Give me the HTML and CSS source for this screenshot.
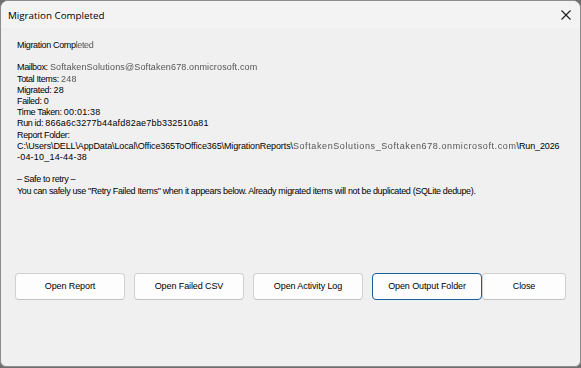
FILE: index.html
```html
<!DOCTYPE html>
<html>
<head>
<meta charset="utf-8">
<link rel="stylesheet" href="styles.css">
</head>
<body>
<div class="window">
  <div class="titlebar">
    <span class="title">Migration Completed</span>
    <span class="close-x"><svg width="12" height="12" viewBox="0 0 12 12"><path d="M1.5 1.5 L10.5 10.5 M10.5 1.5 L1.5 10.5" stroke="#1a1a1a" stroke-width="1.1" fill="none"/></svg></span>
  </div>
  <div class="content">
    <div class="msg">
      <div>Migration Comp<span class="blur">leted</span></div>
      <div class="blank"></div>
      <div>Mailbox: <span class="blur mail">SoftakenSolutions@Softaken678.onmicrosoft.com</span></div>
      <div>Total Items: <span class="blur num">248</span></div>
      <div>Migrated: <span class="num">28</span></div>
      <div>Failed: <span class="num">0</span></div>
      <div>Time Taken: <span class="num">00:01:38</span></div>
      <div>Run id: <span class="num">866a6c3277b44afd82ae7bb332510a81</span></div>
      <div>Report Folder:</div>
      <div><span class="wide">C:\Users\DELL\AppData\Local\Office365ToOffice365\MigrationReports\</span><span class="blur path">SoftakenSolutions_Softaken678.onmicrosoft.com</span><span class="wide">\Run_2026</span></div>
      <div><span class="num">-04-10_14-44-38</span></div>
      <div class="blank"></div>
      <div>– Safe to retry –</div>
      <div>You can safely use "Retry Failed Items" when it appears below. Already migrated items will not be duplicated (SQLite dedupe).</div>
    </div>
    <div class="buttons">
      <button class="btn">Open Report</button>
      <button class="btn">Open Failed CSV</button>
      <button class="btn">Open Activity Log</button>
      <button class="btn focused">Open Output Folder</button>
      <button class="btn close">Close</button>
    </div>
  </div>
</div>
</body>
</html>
```
FILE: styles.css
```css
html, body {
  margin: 0;
  padding: 0;
  background: #6f6f6f;
}
body {
  width: 581px;
  height: 368px;
  overflow: hidden;
}
.window {
  box-sizing: border-box;
  width: 581px;
  height: 367px;
  border: 1px solid #8c8c8c;
  border-radius: 8px 8px 6px 6px;
  background: #f0f0f0;
  display: flex;
  flex-direction: column;
  overflow: hidden;
  font-family: "Liberation Sans", Arial, sans-serif;
  color: #000;
}
.titlebar {
  height: 27px;
  flex: none;
  display: flex;
  align-items: center;
  justify-content: space-between;
  padding: 0 7px 0 7px;
  background: #f3f3f3;
}
.title {
  font-family: "Open Sans", "Noto Sans", sans-serif;
  font-size: 9.8px;
  color: #000;
  padding-top: 1px;
}
.close-x {
  display: flex;
  width: 14px;
  height: 14px;
  align-items: center;
  justify-content: center;
}
.content {
  flex: 1;
  padding: 12px 8px 0 16px;
  display: flex;
  flex-direction: column;
}
.msg {
  font-size: 9px;
  letter-spacing: -0.35px;
  line-height: 11.2px;
  white-space: nowrap;
}
.num {
  letter-spacing: 0.2px;
}
.wide {
  letter-spacing: -0.12px;
}
.blank {
  height: 11.2px;
}
.blur {
  filter: blur(0.7px);
  color: #555;
}
.blur.mail {
  letter-spacing: 0.15px;
}
.blur.path {
  letter-spacing: 0.6px;
}
.buttons {
  margin-top: 76px;
  display: flex;
  margin-left: -2px;
}
.btn {
  flex: none;
  box-sizing: border-box;
  width: 110px;
  height: 27px;
  margin-right: 9px;
  border: 1px solid #d0d0d0;
  border-bottom-color: #c2c2c2;
  border-radius: 4px;
  background: #fdfdfd;
  font-family: "Liberation Sans", Arial, sans-serif;
  font-size: 9px;
  letter-spacing: -0.1px;
  color: #000;
  padding: 0;
}
.btn.focused {
  border: 1px solid #1b5e9e;
  margin-right: 0;
}
.btn.close {
  width: 84px;
}
```
